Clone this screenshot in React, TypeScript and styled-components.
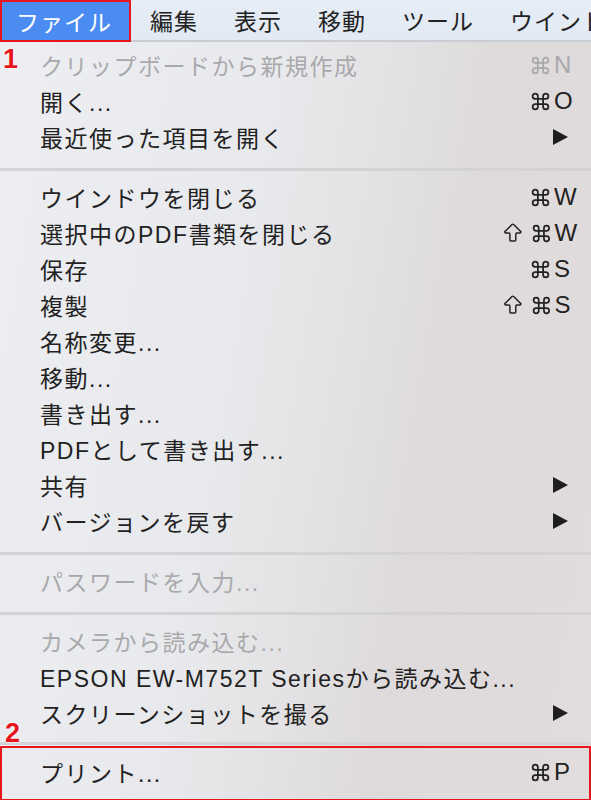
import React from "react";
import styled, { createGlobalStyle } from "styled-components";
import { Command, ArrowBigUp } from "lucide-react";

const GlobalStyle = createGlobalStyle`
  html, body {
    margin: 0;
    padding: 0;
    width: 591px;
    height: 800px;
    overflow: hidden;
    background: #e8e9ec;
  }
  * {
    box-sizing: border-box;
  }
`;

type Item = {
  label: string;
  shortcut?: string;
  shift?: boolean;
  submenu?: boolean;
  disabled?: boolean;
};

const sections: Item[][] = [
  [
    { label: "クリップボードから新規作成", shortcut: "N", disabled: true },
    { label: "開く...", shortcut: "O" },
    { label: "最近使った項目を開く", submenu: true },
  ],
  [
    { label: "ウインドウを閉じる", shortcut: "W" },
    { label: "選択中のPDF書類を閉じる", shortcut: "W", shift: true },
    { label: "保存", shortcut: "S" },
    { label: "複製", shortcut: "S", shift: true },
    { label: "名称変更..." },
    { label: "移動..." },
    { label: "書き出す..." },
    { label: "PDFとして書き出す..." },
    { label: "共有", submenu: true },
    { label: "バージョンを戻す", submenu: true },
  ],
  [{ label: "パスワードを入力...", disabled: true }],
  [
    { label: "カメラから読み込む...", disabled: true },
    { label: "EPSON EW-M752T Seriesから読み込む..." },
    { label: "スクリーンショットを撮る", submenu: true },
  ],
];

const menus = ["ファイル", "編集", "表示", "移動", "ツール", "ウインドウ"];

const SubmenuArrow = () => (
  <svg width="15" height="16" viewBox="0 0 15 16">
    <path d="M0 0 L15 8 L0 16 Z" fill="#1e1e1e" />
  </svg>
);

const MenuRow: React.FC<{ item: Item }> = ({ item }) => (
  <Row $disabled={item.disabled}>
    <Label>{item.label}</Label>
    {item.shortcut && (
      <Shortcut>
        {item.shift && <ArrowBigUp size={24} strokeWidth={1.5} />}
        <CmdIcon size={21} strokeWidth={2} />
        <Key>{item.shortcut}</Key>
      </Shortcut>
    )}
    {item.submenu && (
      <Arrow>
        <SubmenuArrow />
      </Arrow>
    )}
  </Row>
);

export default function App() {
  return (
    <>
      <GlobalStyle />
      <Screen>
        <MenuBar>
          {menus.map((m, i) => (
            <MenuTitle key={m} $active={i === 0}>
              {m}
            </MenuTitle>
          ))}
        </MenuBar>
        <Dropdown>
          <Badge $top={4}>1</Badge>
          {sections.map((section, si) => (
            <React.Fragment key={si}>
              {si > 0 && <Separator />}
              {section.map((item) => (
                <MenuRow key={item.label} item={item} />
              ))}
            </React.Fragment>
          ))}
          <Separator $short />
          <Marked>
            <Badge $top={-28}>2</Badge>
            <MenuRow item={{ label: "プリント...", shortcut: "P" }} />
          </Marked>
        </Dropdown>
      </Screen>
    </>
  );
}

const Screen = styled.div`
  width: 591px;
  height: 800px;
  display: flex;
  flex-direction: column;
  overflow: hidden;
  font-family: "Liberation Sans", "Noto Sans CJK JP", sans-serif;
  color: #222222;
`;

const MenuBar = styled.div`
  display: flex;
  height: 42px;
  flex-shrink: 0;
  background: linear-gradient(180deg, #e6edf6 0%, #e1e9f3 100%);
  border-bottom: 2px solid #c9ccd2;
  white-space: nowrap;
`;

const MenuTitle = styled.div<{ $active?: boolean }>`
  display: flex;
  align-items: center;
  padding: 0 17px 0 19px;
  font-size: 23px;
  letter-spacing: 1px;
  color: ${(p) => (p.$active ? "#ffffff" : "#222222")};
  background: ${(p) => (p.$active ? "#4b8cf2" : "transparent")};
  border: ${(p) => (p.$active ? "2px solid #e8161c" : "0")};
  margin-bottom: ${(p) => (p.$active ? "-2px" : "0")};
  &:first-child {
    padding-left: 14px;
    padding-right: 17px;
  }
`;

const Dropdown = styled.div`
  position: relative;
  flex: 1;
  display: flex;
  flex-direction: column;
  padding-top: 5px;
  background: linear-gradient(
    100deg,
    #eceef1 0%,
    #e8e9ec 40%,
    #dedadb 70%,
    #e2dcdc 100%
  );
`;

const Row = styled.div<{ $disabled?: boolean }>`
  display: flex;
  align-items: center;
  height: 36px;
  padding: 0 10px 0 40px;
  font-size: 23px;
  letter-spacing: 1.5px;
  color: ${(p) => (p.$disabled ? "#a9a9ab" : "#222222")};
  white-space: nowrap;
`;

const Label = styled.span`
  flex: 1;
`;

const Shortcut = styled.span`
  display: flex;
  align-items: center;
  justify-content: flex-end;
  gap: 3px;
  width: 80px;
`;

const CmdIcon = styled(Command)`
  margin-left: 3px;
`;

const Key = styled.span`
  width: 27px;
  font-size: 24px;
  letter-spacing: 0;
  line-height: 1;
`;

const Arrow = styled.span`
  display: flex;
  width: 28px;
`;

const Separator = styled.div<{ $short?: boolean }>`
  height: ${(p) => (p.$short ? "15px" : "24px")};
  padding-top: ${(p) => (p.$short ? "11px" : "13px")};
  &::after {
    content: "";
    display: block;
    width: 100%;
    height: 3px;
    background: #d3d3d6;
  }
`;

const Marked = styled.div`
  position: relative;
  margin-top: 0;
  padding: 6px 0 9px;
  border: 2px solid #e8161c;
  border-radius: 1px;
  & > div {
    margin: 0 -2px;
  }
`;

const Badge = styled.span<{ $top: number }>`
  position: absolute;
  left: 3px;
  top: ${(p) => p.$top}px;
  font-family: "Liberation Sans", Arial, sans-serif;
  font-weight: bold;
  font-size: 27px;
  line-height: 1;
  color: #e8161c;
  text-shadow: 0 0 2px #ffffff, 0 0 2px #ffffff;
`;
